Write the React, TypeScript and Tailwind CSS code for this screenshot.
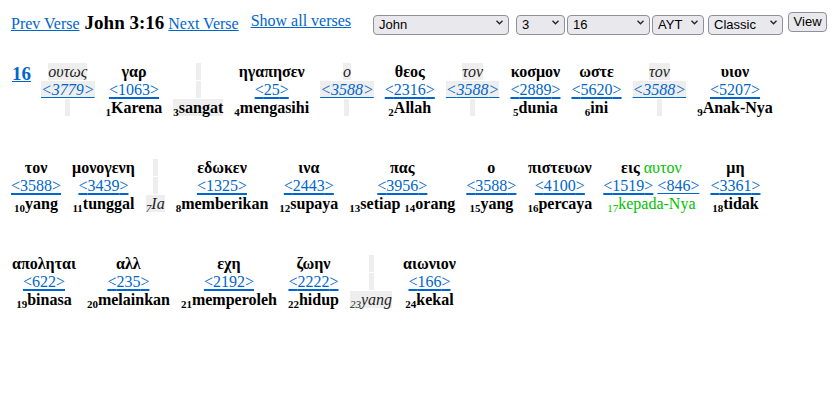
import React from "react";

// one column of the interlinear: greek / strong / indonesian
const Cell = ({g, s, t}: { g: React.ReactNode; s: React.ReactNode; t: React.ReactNode }) => (
    <div className="flex flex-col items-center">
        <div className="h-[18px] leading-[18px] whitespace-nowrap">{g}</div>
        <div className="h-[18px] leading-[18px] whitespace-nowrap">{s}</div>
        <div className="h-[18px] leading-[18px] whitespace-nowrap">{t}</div>
    </div>
);

const blank = <span className="inline-block w-[5px] h-[17px] bg-[#eeeeee] align-top"/>;

const gk = (text: string) => <span className="font-bold">{text}</span>;
const gki = (text: string) => <span className="italic bg-[#eeeeee] text-[#222]">{text}</span>;

const st = (n: string) => (
    <a href="#" className="text-[#0066cc] underline decoration-2 underline-offset-2">&lt;{n}&gt;</a>
);
const sti = (n: string) => (
    <a href="#" className="italic text-[#0066cc] underline underline-offset-2 bg-[#eeeeee]">&lt;{n}&gt;</a>
);

const id = (n: string, t: string) => (
    <span className="font-bold"><sub className="text-[11px]">{n}</sub>{t}</span>
);

const Select = ({w, value, options}: { w: string; value: string; options: string[] }) => (
    <div className={`relative h-[20px] ${w}`}>
        <select
            defaultValue={value}
            className="appearance-none w-full h-full pl-[5px] pr-[14px] text-[13px] leading-[18px] bg-[#e9e9ed] border border-[#8f8f9d] rounded-[4px] text-black"
            style={{fontFamily: '"Liberation Sans", Arial, sans-serif'}}
        >
            {options.map((o) => (
                <option key={o}>{o}</option>
            ))}
        </select>
        <svg className="absolute right-[6px] top-[8px] pointer-events-none" width="7" height="5" viewBox="0 0 7 5">
            <polyline points="0.5,0.8 3.5,3.8 6.5,0.8" fill="none" stroke="#222" strokeWidth="1.3"/>
        </svg>
    </div>
);

export default function App() {
    return (
        <div className="w-[838px] h-[404px] bg-white text-black text-[16px]"
             style={{fontFamily: '"Liberation Serif", "Times New Roman", serif'}}>
            {/* header */}
            <div className="flex items-start pt-[12px] pl-[11px]">
                <div className="flex items-baseline">
                    <a href="#" className="text-[#0066cc] underline leading-[18px]">Prev Verse</a>
                    <span className="ml-[5px] font-bold text-[19px] leading-[22px]">John 3:16</span>
                    <a href="#" className="ml-[4px] text-[#0066cc] underline leading-[18px]">Next Verse</a>
                </div>
                <a href="#" className="ml-[12px] text-[#0066cc] underline leading-[18px]">Show all verses</a>
                <div className="flex items-start ml-[22px]">
                    <Select w="w-[136px]" value="John" options={["Matthew", "Mark", "Luke", "John", "Acts"]}/>
                    <div className="ml-[7px]"><Select w="w-[49px]" value="3" options={["1", "2", "3", "4"]}/></div>
                    <div className="ml-[2px]"><Select w="w-[83px]" value="16" options={["15", "16", "17"]}/></div>
                    <div className="ml-[2px]"><Select w="w-[52px]" value="AYT" options={["AYT", "TB"]}/></div>
                    <div className="ml-[4px]"><Select w="w-[75px]" value="Classic" options={["Classic", "Modern"]}/></div>
                    <button
                        className="ml-[5px] w-[39px] h-[20px] text-[13px] leading-[18px] bg-[#e9e9ed] border border-[#8f8f9d] rounded-[4px]"
                        style={{fontFamily: '"Liberation Sans", Arial, sans-serif'}}
                    >
                        View
                    </button>
                </div>
            </div>

            {/* verse */}
            <div className="flex flex-col gap-y-[42px] pt-[29px] pl-[12px]">
                <div className="flex items-start gap-x-[11px]">
                    <a href="#" className="font-bold text-[19px] leading-[22px] text-[#0066cc] underline -mr-[1px]">16</a>
                    <Cell g={gki("ουτως")} s={sti("3779")} t={blank}/>
                    <Cell g={gk("γαρ")} s={st("1063")} t={id("1", "Karena")}/>
                    <Cell g={blank} s={blank} t={<span className="bg-[#eeeeee]">{id("3", "sangat")}</span>}/>
                    <Cell g={gk("ηγαπησεν")} s={st("25")} t={id("4", "mengasihi")}/>
                    <Cell g={gki("ο")} s={sti("3588")} t={blank}/>
                    <Cell g={gk("θεος")} s={st("2316")} t={id("2", "Allah")}/>
                    <Cell g={gki("τον")} s={sti("3588")} t={blank}/>
                    <Cell g={gk("κοσμον")} s={st("2889")} t={id("5", "dunia")}/>
                    <Cell g={gk("ωστε")} s={st("5620")} t={id("6", "ini")}/>
                    <Cell g={gki("τον")} s={sti("3588")} t={blank}/>
                    <Cell g={gk("υιον")} s={st("5207")} t={id("9", "Anak-Nya")}/>
                </div>

                <div className="flex items-start gap-x-[11px] -ml-[1px]">
                    <Cell g={gk("τον")} s={st("3588")} t={id("10", "yang")}/>
                    <Cell g={gk("μονογενη")} s={st("3439")} t={id("11", "tunggal")}/>
                    <Cell g={blank} s={blank}
                          t={<span className="italic bg-[#eeeeee] text-[#222]"><sub className="text-[11px]">7</sub>Ia</span>}/>
                    <Cell g={gk("εδωκεν")} s={st("1325")} t={id("8", "memberikan")}/>
                    <Cell g={gk("ινα")} s={st("2443")} t={id("12", "supaya")}/>
                    <Cell g={gk("πας")} s={st("3956")} t={<>{id("13", "setiap")} {id("14", "orang")}</>}/>
                    <Cell g={gk("ο")} s={st("3588")} t={id("15", "yang")}/>
                    <Cell g={gk("πιστευων")} s={st("4100")} t={id("16", "percaya")}/>
                    <Cell
                        g={<>{gk("εις")} <span className="text-[#00c000]">αυτον</span></>}
                        s={<>{st("1519")} <a href="#"
                                             className="text-[#0066cc] underline underline-offset-2">&lt;846&gt;</a></>}
                        t={<span className="text-[#00c000]"><sub className="text-[11px]">17</sub>kepada-Nya</span>}
                    />
                    <Cell g={gk("μη")} s={st("3361")} t={id("18", "tidak")}/>
                </div>

                <div className="flex items-start gap-x-[11px]">
                    <Cell g={gk("αποληται")} s={st("622")} t={id("19", "binasa")}/>
                    <Cell g={gk("αλλ")} s={st("235")} t={id("20", "melainkan")}/>
                    <Cell g={gk("εχη")} s={st("2192")} t={id("21", "memperoleh")}/>
                    <Cell g={gk("ζωην")} s={st("2222")} t={id("22", "hidup")}/>
                    <Cell g={blank} s={blank}
                          t={<span className="italic bg-[#eeeeee] text-[#222]"><sub className="text-[11px]">23</sub>yang</span>}/>
                    <Cell g={gk("αιωνιον")} s={st("166")} t={id("24", "kekal")}/>
                </div>
            </div>
        </div>
    );
}
